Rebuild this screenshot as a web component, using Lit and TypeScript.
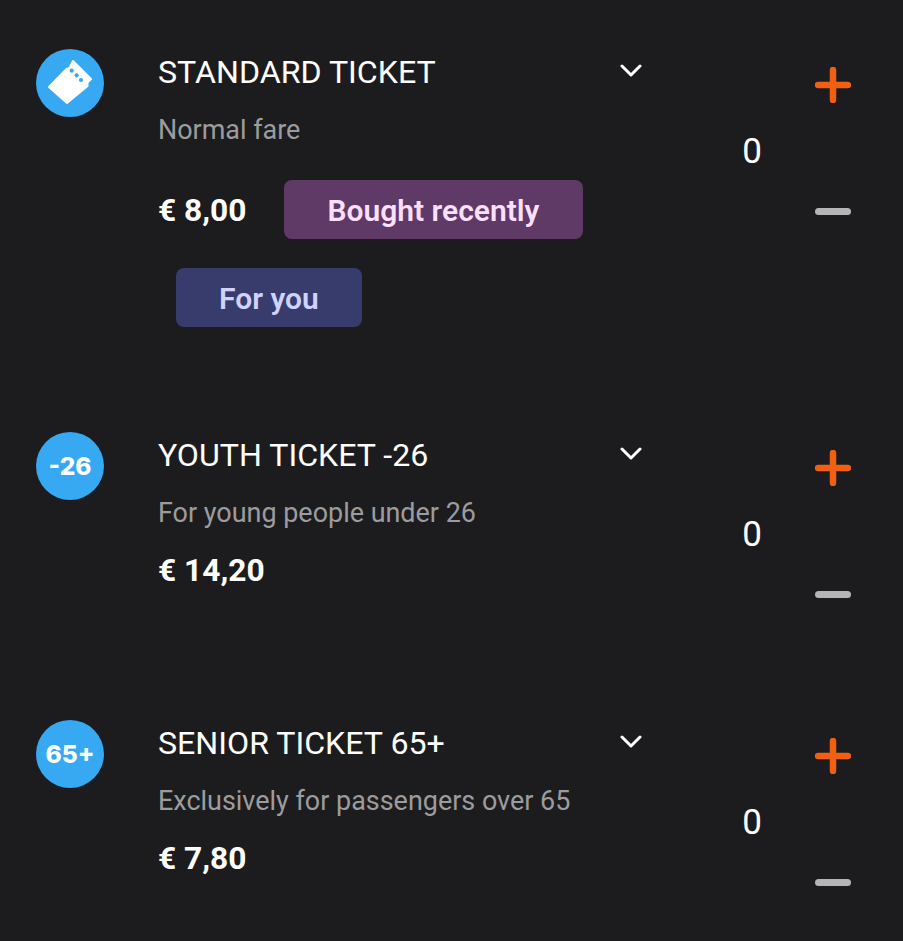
import { LitElement, html, css, nothing } from "lit";
import { customElement } from "lit/decorators.js";

type Ticket = {
  title: string;
  desc: string;
  price: string;
  badge?: string;
  tags?: { label: string; kind: string }[];
};

const tickets: Ticket[] = [
  {
    title: "STANDARD TICKET",
    desc: "Normal fare",
    price: "€ 8,00",
    tags: [
      { label: "Bought recently", kind: "purple" },
      { label: "For you", kind: "blue" },
    ],
  },
  { title: "YOUTH TICKET -26", desc: "For young people under 26", price: "€ 14,20", badge: "-26" },
  { title: "SENIOR TICKET 65+", desc: "Exclusively for passengers over 65", price: "€ 7,80", badge: "65+" },
];

@customElement("app-root")
export class AppRoot extends LitElement {
  static styles = css`
    :host {
      display: block;
      height: 941px;
      overflow: hidden;
      background: #1c1c1e;
      color: #fff;
      font-family: Roboto, "Liberation Sans", sans-serif;
    }
    .list {
      padding-top: 43px;
    }
    .row {
      display: flex;
      box-sizing: border-box;
      min-height: 288px;
      padding: 0 52px 91px 36px;
    }
    .badge {
      flex: none;
      display: flex;
      align-items: center;
      justify-content: center;
      width: 68px;
      height: 68px;
      margin: 6px 54px 0 0;
      border-radius: 50%;
      background: #36a9f2;
      font-family: Inter, sans-serif;
      font-size: 24.5px;
      font-weight: 800;
    }
    .badge svg {
      display: block;
    }
    .main {
      flex: none;
      width: 484px;
    }
    .head {
      display: flex;
      align-items: center;
      justify-content: space-between;
      height: 58px;
      font-size: 32.15px;
    }
    .head svg {
      display: block;
      margin-top: -3px;
    }
    .desc {
      height: 58px;
      line-height: 58px;
      font-size: 26.95px;
      color: #9c9c9e;
    }
    .buy {
      display: flex;
      flex-wrap: wrap;
      align-items: baseline;
      width: 470px;
    }
    .price {
      height: 58px;
      line-height: 58px;
      margin-right: 20px;
      font-size: 31.7px;
      font-weight: 700;
    }
    .tag {
      margin: 21px 18px 8px;
      padding: 0 43px;
      height: 59px;
      line-height: 61px;
      border-radius: 8px;
      font-size: 30px;
      font-weight: 600;
    }
    .purple {
      background: #5f3a66;
      color: #fbdfff;
    }
    .blue {
      background: #373c6c;
      color: #cfd2ff;
    }
    .count {
      flex: none;
      width: 60px;
      margin: 88px 0 0 80px;
      height: 42px;
      line-height: 42px;
      text-align: center;
      font-size: 35px;
    }
    .step {
      display: flex;
      flex-direction: column;
      margin: 24px 0 0 33px;
    }
    .step svg {
      display: block;
    }
    .minus {
      margin-top: 105px;
    }
  `;

  private ticketIcon() {
    return html`<svg width="56" height="56" viewBox="0 0 56 56">
      <path
        fill="#fff"
        stroke="#fff"
        stroke-width="2"
        stroke-linejoin="round"
        d="M31 6 L49 24 L45.5 27.5 L45.5 31 L25 48 L7 32 L24.5 14 L27.5 13 Z"
      />
      <circle cx="29.7" cy="15.7" r="2.1" fill="#36a9f2" />
      <circle cx="34.7" cy="20.3" r="2.1" fill="#36a9f2" />
      <circle cx="39" cy="25" r="2.1" fill="#36a9f2" />
    </svg>`;
  }

  render() {
    return html`<div class="list">
      ${tickets.map(
        (t) => html`<div class="row">
          <div class="badge">${t.badge ?? this.ticketIcon()}</div>
          <div class="main">
            <div class="head">
              <span>${t.title}</span>
              <svg width="22" height="13" viewBox="0 0 22 13">
                <path d="M2 2 L11 11 L20 2" fill="none" stroke="#fff" stroke-width="3" stroke-linecap="round" stroke-linejoin="round" />
              </svg>
            </div>
            <div class="desc">${t.desc}</div>
            <div class="buy">
              <span class="price">${t.price}</span>
              ${t.tags
                ? t.tags.map((g) => html`<span class="tag ${g.kind}">${g.label}</span>`)
                : nothing}
            </div>
          </div>
          <div class="count">0</div>
          <div class="step">
            <svg width="36" height="36" viewBox="0 0 36 36">
              <path d="M3 18 H33 M18 3 V33" stroke="#f15f14" stroke-width="6.5" stroke-linecap="round" />
            </svg>
            <svg class="minus" width="36" height="7" viewBox="0 0 36 7">
              <path d="M3.5 3.5 H32.5" stroke="#b5b5b5" stroke-width="7" stroke-linecap="round" />
            </svg>
          </div>
        </div>`
      )}
    </div>`;
  }
}
